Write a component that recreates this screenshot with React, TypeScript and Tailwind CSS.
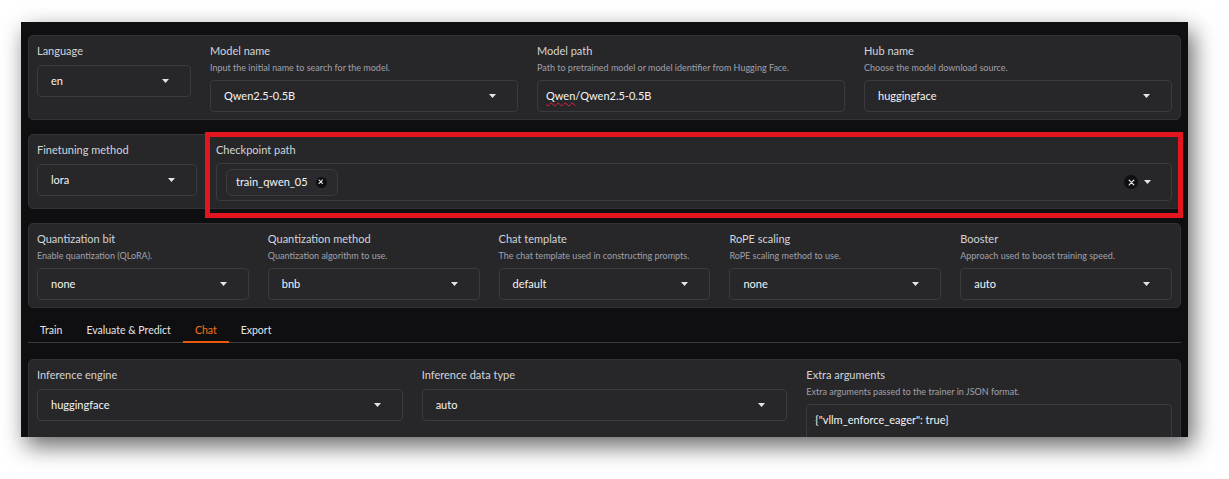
import type { ReactNode } from "react";

const font = "font-['Lato','Liberation_Sans',sans-serif]";

function Caret() {
  return (
    <svg width="7" height="4" viewBox="0 0 7 4" className="shrink-0">
      <path d="M0 0H7L3.5 4Z" fill="#e4e4e7" />
    </svg>
  );
}

function Label({ children }: { children: ReactNode }) {
  return <div className="h-[14px] text-[11px] leading-[14px] text-[#d4d4d8]">{children}</div>;
}

function Desc({ children }: { children: ReactNode }) {
  return <div className="mt-[4px] h-[12px] text-[9px] leading-[12px] text-[#a1a1aa]">{children}</div>;
}

interface FieldProps {
  label: string;
  desc?: string;
  value: ReactNode;
  select?: boolean;
}

function Field({ label, desc, value, select = true }: FieldProps) {
  return (
    <div className="min-w-0">
      <Label>{label}</Label>
      {desc && <Desc>{desc}</Desc>}
      <div
        className={`${desc ? "mt-[6px]" : "mt-[7px]"} h-[32px] rounded-[4px] border border-[#3a3a3f] bg-[#27272a] flex items-center justify-between ${
          select ? "pl-[13px] pr-[21px]" : "pl-[8px] pr-[8px]"
        }`}
      >
        <span className="text-[11px] leading-[20px] text-[#f4f4f5] whitespace-nowrap">{value}</span>
        {select && <Caret />}
      </div>
    </div>
  );
}

function Panel({ children, className = "" }: { children: ReactNode; className?: string }) {
  return (
    <div className={`rounded-[5px] border border-[#333337] bg-[#27272a] px-[8px] pt-[8px] pb-[7px] ${className}`}>
      {children}
    </div>
  );
}

function ClearDot({ size }: { size: number }) {
  return (
    <span
      className="rounded-full bg-[#0f0f11] flex items-center justify-center shrink-0"
      style={{ width: size, height: size }}
    >
      <svg width={size * 0.5} height={size * 0.5} viewBox="0 0 6 6">
        <path d="M1 1L5 5M5 1L1 5" stroke="#e4e4e7" strokeWidth="1.1" strokeLinecap="round" />
      </svg>
    </span>
  );
}

const tabs = ["Train", "Evaluate & Predict", "Chat", "Export"];

export default function App() {
  return (
    <div className={`w-[1229px] h-[479px] bg-white overflow-hidden ${font}`}>
      <div className="ml-[21px] mt-[22px] w-[1167px] h-[415px] bg-[#0f0f11] overflow-hidden px-[7px] pt-[13px] shadow-[5px_9px_22px_rgba(0,0,0,0.6)]">
        {/* top row */}
        <Panel className="grid grid-cols-[1fr_2fr_2fr_2fr] gap-x-[19px]">
          <Field label="Language" value="en" />
          <Field label="Model name" desc="Input the initial name to search for the model." value="Qwen2.5-0.5B" />
          <Field
            label="Model path"
            desc="Path to pretrained model or model identifier from Hugging Face."
            select={false}
            value={
              <>
                <span className="underline decoration-wavy decoration-[#e11d48] decoration-[1px] underline-offset-[2px]">Qwen</span>
                /Qwen2.5-0.5B
              </>
            }
          />
          <Field label="Hub name" desc="Choose the model download source." value="huggingface" />
        </Panel>

        {/* finetuning + checkpoint */}
        <div className="relative mt-[14px]">
          <Panel className="grid grid-cols-[160px_1fr] gap-x-[19px]">
            <Field label="Finetuning method" value="lora" />
            <div className="min-w-0">
              <Label>Checkpoint path</Label>
              <div className="mt-[6px] h-[38px] rounded-[4px] border border-[#3a3a3f] bg-[#27272a] flex items-center pl-[9px] pr-[20px]">
                <div className="h-[27px] rounded-[6px] border border-[#3a3a3f] bg-[#2a2a2e] flex items-center pl-[9px] pr-[10px] gap-[8px]">
                  <span className="text-[11px] text-[#f4f4f5]">train_qwen_05</span>
                  <ClearDot size={11} />
                </div>
                <div className="flex-1" />
                <div className="flex items-center gap-[6px]">
                  <ClearDot size={14} />
                  <Caret />
                </div>
              </div>
            </div>
          </Panel>
          <div className="absolute left-[177px] right-[-2px] top-[-2px] bottom-[-9px] border-[5px] border-[#e3161f] pointer-events-none" />
        </div>

        {/* quantization row */}
        <Panel className="mt-[14px] grid grid-cols-5 gap-x-[19px]">
          <Field label="Quantization bit" desc="Enable quantization (QLoRA)." value="none" />
          <Field label="Quantization method" desc="Quantization algorithm to use." value="bnb" />
          <Field label="Chat template" desc="The chat template used in constructing prompts." value="default" />
          <Field label="RoPE scaling" desc="RoPE scaling method to use." value="none" />
          <Field label="Booster" desc="Approach used to boost training speed." value="auto" />
        </Panel>

        {/* tabs */}
        <div className="mt-[11px] flex border-b border-[#3a3a3f]">
          {tabs.map((t) => (
            <button
              key={t}
              className={`h-[24px] -mb-px px-[12px] pt-[1px] border-b-2 text-[10.5px] ${
                t === "Chat" ? "border-[#ea580c] text-[#f97316]" : "border-transparent text-[#e4e4e7]"
              }`}
            >
              {t}
            </button>
          ))}
        </div>

        {/* chat settings */}
        <Panel className="mt-[16px] grid grid-cols-3 gap-x-[19px]">
          <Field label="Inference engine" value="huggingface" />
          <Field label="Inference data type" value="auto" />
          <div className="min-w-0">
            <Label>Extra arguments</Label>
            <Desc>Extra arguments passed to the trainer in JSON format.</Desc>
            <div className="mt-[6px] h-[40px] rounded-[4px] border border-[#3a3a3f] bg-[#27272a] pl-[8px] pt-[7px] text-[11px] leading-[16px] text-[#f4f4f5]">
              {'{"vllm_enforce_eager": true}'}
            </div>
          </div>
        </Panel>
      </div>
    </div>
  );
}
